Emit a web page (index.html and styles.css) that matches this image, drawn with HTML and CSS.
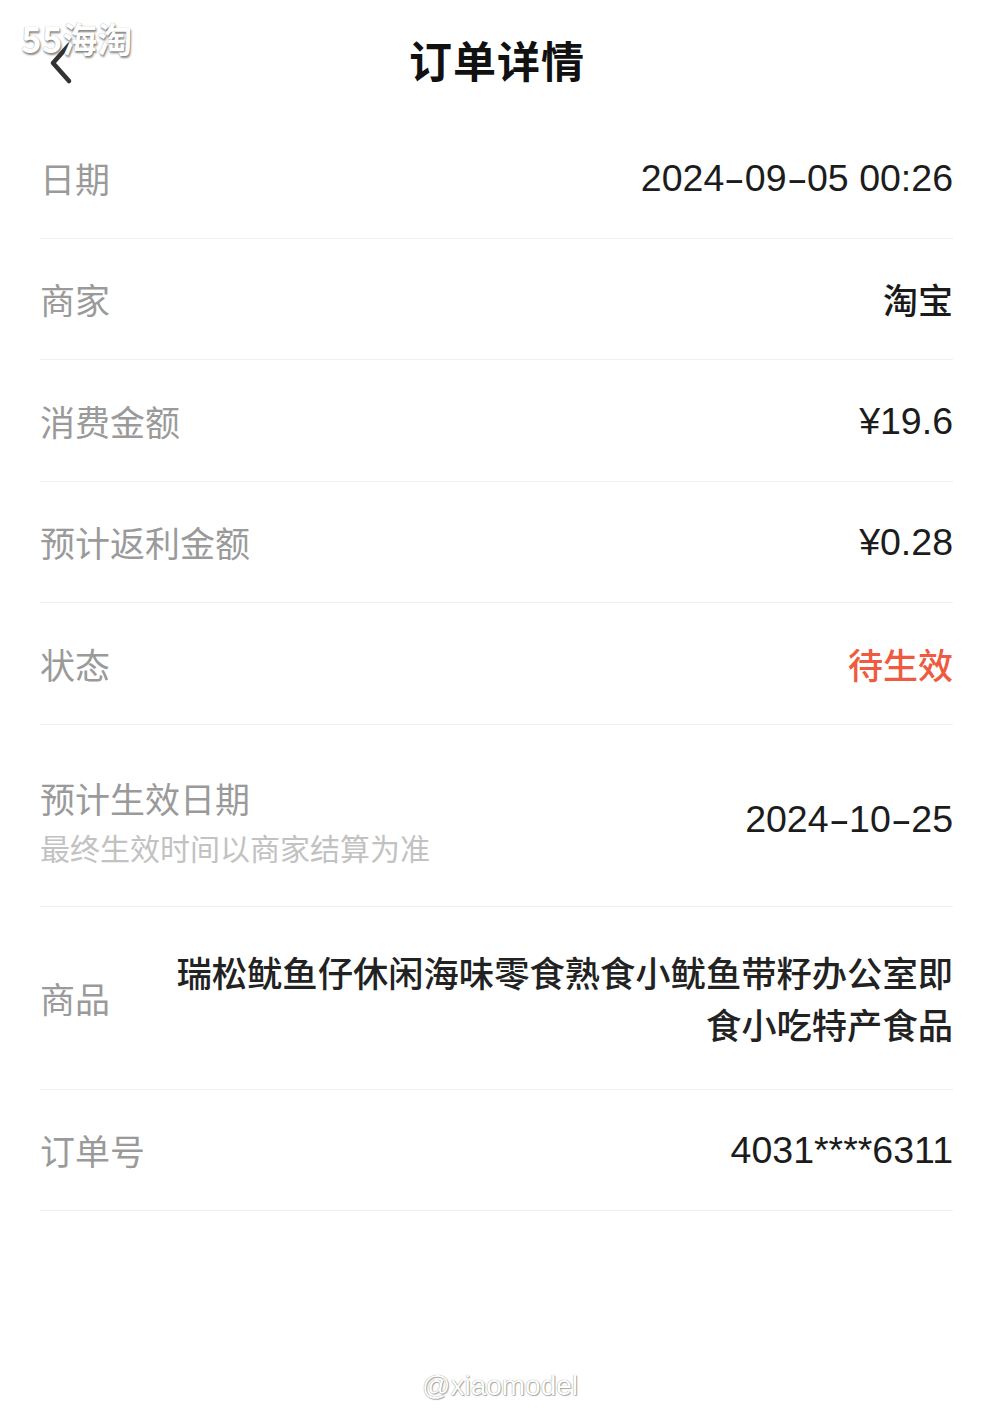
FILE: index.html
```html
<!DOCTYPE html>
<html lang="zh-CN">
  <head>
    <meta charset="UTF-8" />
    <meta name="viewport" content="width=device-width, initial-scale=1.0" />
    <title>订单详情</title>
    <link rel="stylesheet" href="styles.css">
  </head>
  <body>
    <div class="page">
      <header class="topbar">
        <a class="back" href="#">
          <svg width="26" height="44" viewBox="0 0 26 44">
            <path d="M21 4 L5 22 L21 40" fill="none" stroke="#333" stroke-width="4.5" stroke-linecap="round" stroke-linejoin="round" />
          </svg>
        </a>
        <h1>订单详情</h1>
        <span></span>
      </header>

      <ul class="detail">
        <li class="row">
          <span class="label">日期</span>
          <span class="value num">2024<span class="dash">-</span>09<span class="dash">-</span>05&nbsp;00:26</span>
        </li>
        <li class="row">
          <span class="label">商家</span>
          <span class="value">淘宝</span>
        </li>
        <li class="row">
          <span class="label">消费金额</span>
          <span class="value num">¥19.6</span>
        </li>
        <li class="row">
          <span class="label">预计返利金额</span>
          <span class="value num">¥0.28</span>
        </li>
        <li class="row">
          <span class="label">状态</span>
          <span class="value status">待生效</span>
        </li>
        <li class="row row-tall">
          <div>
            <span class="label">预计生效日期</span>
            <p class="hint">最终生效时间以商家结算为准</p>
          </div>
          <span class="value num">2024<span class="dash">-</span>10<span class="dash">-</span>25</span>
        </li>
        <li class="row row-goods">
          <span class="label">商品</span>
          <span class="value goods">瑞松鱿鱼仔休闲海味零食熟食小鱿鱼带籽办公室即食小吃特产食品</span>
        </li>
        <li class="row">
          <span class="label">订单号</span>
          <span class="value num">4031****6311</span>
        </li>
      </ul>
    </div>

    <div class="mark mark-top">55海淘</div>
    <div class="mark mark-bottom">@xiaomodel</div>
  </body>
</html>
```

FILE: styles.css
```css
*,
*::before,
*::after {
  margin: 0;
  padding: 0;
  box-sizing: border-box;
}
html,
body {
  width: 100%;
  height: 100%;
  font-family: "Liberation Sans", "Noto Sans CJK SC", sans-serif;
  background-color: #fff;
  color: #1a1a1a;
}

.page {
  position: relative;
  min-height: 100vh;
}

.topbar {
  display: grid;
  grid-template-columns: 1fr auto 1fr;
  align-items: center;
  height: 118px;
  padding: 0 48px;
}

.topbar .back {
  display: flex;
  align-items: center;
  margin-top: 7px;
}

.topbar h1 {
  font-size: 43px;
  font-weight: 700;
  color: #111;
  letter-spacing: 1px;
}

.detail {
  list-style: none;
  margin: 0 41px 0 40px;
}

.row {
  display: flex;
  align-items: center;
  justify-content: space-between;
  min-height: 121px;
  border-bottom: 1.5px solid #efefef;
}

.row:nth-child(3),
.row:nth-child(5) {
  min-height: 122px;
}

.label {
  font-family: "Noto Sans CJK SC", sans-serif;
  font-size: 35px;
  line-height: 46px;
  color: #9a9a9a;
  white-space: nowrap;
}

.value {
  font-family: "Noto Sans CJK SC", sans-serif;
  font-size: 35px;
  font-weight: 500;
  line-height: 46px;
  text-align: right;
}

.value.num {
  font-family: "Liberation Sans", "Noto Sans CJK SC", sans-serif;
  font-weight: 400;
  font-size: 37.5px;
  color: #1c1c1c;
  white-space: nowrap;
}

.dash {
  display: inline-block;
  margin: 0 4px;
  transform: scaleX(1.7);
}

.value.status {
  color: #ee5b40;
}

.row-tall {
  align-items: flex-start;
  padding: 50px 0 39px;
}

.row-tall .value {
  margin-top: 21px;
}

.hint {
  margin-top: 6px;
  font-family: "Noto Sans CJK SC", sans-serif;
  font-size: 30px;
  line-height: 40px;
  color: #c2c2c2;
  white-space: nowrap;
}

.row-goods {
  padding: 39px 0;
}

.goods {
  font-size: 35.3px;
  line-height: 52px;
  margin-left: 62px;
  max-width: 780px;
  color: #222;
}

.mark {
  position: absolute;
  color: #fff;
  white-space: nowrap;
}

.mark-top {
  top: 18px;
  left: 21px;
  font-family: "Noto Sans CJK SC", sans-serif;
  font-size: 35px;
  font-weight: 700;
  line-height: 40px;
  letter-spacing: 0;
  text-shadow: 1px 2px 2px rgba(0, 0, 0, 0.45), 0 0 1px rgba(0, 0, 0, 0.4);
}

.mark-bottom {
  top: 1369px;
  left: 422px;
  font-family: "Liberation Sans", sans-serif;
  font-size: 28px;
  line-height: 34px;
  text-shadow: 0 0 1px rgba(0, 0, 0, 0.5), 1px 1px 1px rgba(0, 0, 0, 0.3);
}
```
